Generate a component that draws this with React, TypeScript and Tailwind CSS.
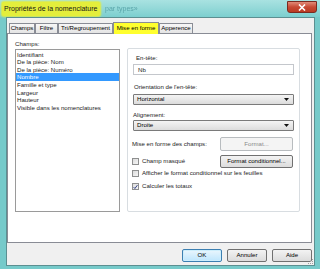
import React from "react";

const fields = [
  "Identifiant",
  "De la pièce: Nom",
  "De la pièce: Numéro",
  "Nombre",
  "Famille et type",
  "Largeur",
  "Hauteur",
  "Visible dans les nomenclatures",
];

function Tab({ label, width, active }: { label: string; width: string; active?: boolean }) {
  if (active) {
    return (
      <div className={`${width} h-[12px] -mb-px border border-b-0 border-[#898c95] bg-[#ffff2e] flex items-center justify-center text-[6.1px] leading-none text-black z-10`}>
        {label}
      </div>
    );
  }
  return (
    <div className={`${width} h-[10px] border border-b-0 border-[#898c95] bg-gradient-to-b from-[#f7f7f7] to-[#e4e4e4] flex items-center justify-center text-[6.1px] leading-none text-black`}>
      {label}
    </div>
  );
}

function Select({ value }: { value: string }) {
  return (
    <div className="ml-[5px] w-[161px] h-[11px] border border-[#7a7a7a] rounded-[1px] bg-gradient-to-b from-[#f4f4f4] to-[#dcdcdc] flex items-center pl-[3px] pr-[4px] text-[6.1px] leading-none text-black">
      <span className="flex-1">{value}</span>
      <svg width="5" height="3" viewBox="0 0 5 3">
        <path d="M0 0 H5 L2.5 3 Z" fill="#111" />
      </svg>
    </div>
  );
}

function Checkbox({ checked }: { checked?: boolean }) {
  return (
    <div className="w-[7px] h-[7px] border border-[#8e8f8f] bg-gradient-to-br from-[#dcdcdc] to-[#f6f6f6] flex items-center justify-center">
      {checked && (
        <svg width="6" height="6" viewBox="0 0 6 6">
          <path d="M0.8 3.2 L2.3 4.8 L5.3 0.8" stroke="#21307a" strokeWidth="1.1" fill="none" />
        </svg>
      )}
    </div>
  );
}

export default function App() {
  return (
    <div className="w-[320px] h-[269px] overflow-hidden bg-[#76caca] flex flex-col font-['Liberation_Sans',Arial,sans-serif] text-[#1b1b1b]">
      {/* title bar */}
      <div className="h-[17px] flex items-start bg-gradient-to-b from-[#a9e2e1] to-[#7ccfcf]">
        <div className="ml-[2px] mt-[2px] h-[14px] w-[98px] rounded-[2px] bg-[#e4ee3c] shadow-[0_0_2px_1px_#e4ee3c] pl-[2px] text-[7px] leading-[14px] text-[#141414]">
          Propriétés de la nomenclature
        </div>
        <div className="ml-[5px] mt-[2px] text-[7px] leading-[14px] text-[#5aa5aa] blur-[0.6px]">par types»</div>
        <div className="flex-1" />
        <div className="mr-[3px] mt-[1px] w-[30px] h-[12px] rounded-b-[3px] border border-[#7a2a20] bg-gradient-to-b from-[#e08a78] via-[#c74a34] to-[#b93a22] flex items-center justify-center">
          <svg width="8" height="7" viewBox="0 0 8 7">
            <path d="M1 0.5 L7 6.5 M7 0.5 L1 6.5" stroke="#fff" strokeWidth="1.6" />
          </svg>
        </div>
      </div>

      {/* client area */}
      <div className="ml-[6px] mr-[5px] h-[249px] border border-[#5c8f91] bg-[#f0f0f0] flex flex-col relative">
        {/* tabs */}
        <div className="h-[15px] flex items-end pl-[2px]">
          <Tab label="Champs" width="w-[26px]" />
          <Tab label="Filtre" width="w-[23px]" />
          <Tab label="Tri/Regroupement" width="w-[55px]" />
          <Tab label="Mise en forme" width="w-[46px]" active />
          <Tab label="Apperence" width="w-[34px]" />
        </div>

        {/* panel */}
        <div className="w-[305px] h-[210px] border border-[#898c95] bg-white flex pl-[7px]">
          <div className="w-[105px] flex flex-col">
            <div className="mt-[6px] h-[8px] text-[6.1px] leading-[8px]">Champs:</div>
            <div className="mt-[1px] h-[163px] border border-[#9a9a9a] pt-[0.5px]">
              {fields.map((f) =>
                f === "Nombre" ? (
                  <div key={f} className="h-[7.67px] bg-[#3399ff] text-white pl-[1px] text-[6.1px] leading-[7.67px]">
                    {f}
                  </div>
                ) : (
                  <div key={f} className="h-[7.67px] pl-[1px] text-[6.1px] leading-[7.67px]">
                    {f}
                  </div>
                )
              )}
            </div>
          </div>

          <div className="ml-[7px] mt-[14px] w-[173px] h-[164px] border border-[#d8dde1] rounded-[2px] flex flex-col text-[6.1px]">
            <div className="mt-[5px] ml-[8px] h-[8px] leading-[8px]">En-tête:</div>
            <div className="mt-[2px] ml-[5px] w-[161px] h-[11px] border border-[#c4c7cc] bg-white pl-[4px] leading-[9px]">Nb</div>

            <div className="mt-[8px] ml-[6px] h-[8px] leading-[8px]">Orientation de l'en-tête:</div>
            <div className="mt-[3px]">
              <Select value="Horizontal" />
            </div>

            <div className="mt-[6px] ml-[5px] h-[8px] leading-[8px]">Alignement:</div>
            <div className="mt-[1px]">
              <Select value="Droite" />
            </div>

            <div className="mt-[6px] ml-[4px] h-[14px] flex items-center">
              <span className="flex-1 leading-none">Mise en forme des champs:</span>
              <div className="mr-[6px] w-[73px] h-[14px] border border-[#b8bcbf] rounded-[2px] bg-[#f4f4f4] flex items-center justify-center text-[#8a8a8a] leading-none">
                Format...
              </div>
            </div>

            <div className="mt-[4px] ml-[4px] h-[13px] flex items-center">
              <Checkbox />
              <span className="ml-[3px] flex-1 leading-none">Champ masqué</span>
              <div className="mr-[6px] w-[73px] h-[13px] border border-[#707070] rounded-[2px] bg-gradient-to-b from-[#f3f3f3] to-[#dcdcdc] flex items-center justify-center text-black leading-none">
                Format conditionnel...
              </div>
            </div>

            <div className="mt-[1px] ml-[4px] h-[9px] flex items-center">
              <Checkbox />
              <span className="ml-[3px] leading-none">Afficher le format conditionnel sur les feuilles</span>
            </div>

            <div className="mt-[4px] ml-[4px] h-[9px] flex items-center">
              <Checkbox checked />
              <span className="ml-[3px] leading-none">Calculer les totaux</span>
            </div>
          </div>
        </div>

        {/* buttons */}
        <div className="mt-[6px] mr-[2px] h-[13px] flex justify-end gap-[5px] text-[6.1px] leading-none">
          <div className="w-[40px] h-[13px] border border-[#3c7fb1] rounded-[2px] bg-gradient-to-b from-[#eaf6fd] to-[#bee6fd] shadow-[inset_0_0_0_1px_#cdeefc] flex items-center justify-center text-black">
            OK
          </div>
          <div className="w-[40px] h-[13px] border border-[#707070] rounded-[2px] bg-gradient-to-b from-[#f3f3f3] to-[#dcdcdc] flex items-center justify-center text-black">
            Annuler
          </div>
          <div className="w-[40px] h-[13px] border border-[#707070] rounded-[2px] bg-gradient-to-b from-[#f3f3f3] to-[#dcdcdc] flex items-center justify-center text-black">
            Aide
          </div>
        </div>

        {/* size grip */}
        <svg className="absolute right-[0px] bottom-[0px]" width="6" height="6" viewBox="0 0 6 6">
          <rect x="4" y="0" width="1" height="1" fill="#a0a0a0" />
          <rect x="2" y="2" width="1" height="1" fill="#a0a0a0" />
          <rect x="4" y="2" width="1" height="1" fill="#a0a0a0" />
          <rect x="0" y="4" width="1" height="1" fill="#a0a0a0" />
          <rect x="2" y="4" width="1" height="1" fill="#a0a0a0" />
          <rect x="4" y="4" width="1" height="1" fill="#a0a0a0" />
        </svg>
      </div>
    </div>
  );
}
